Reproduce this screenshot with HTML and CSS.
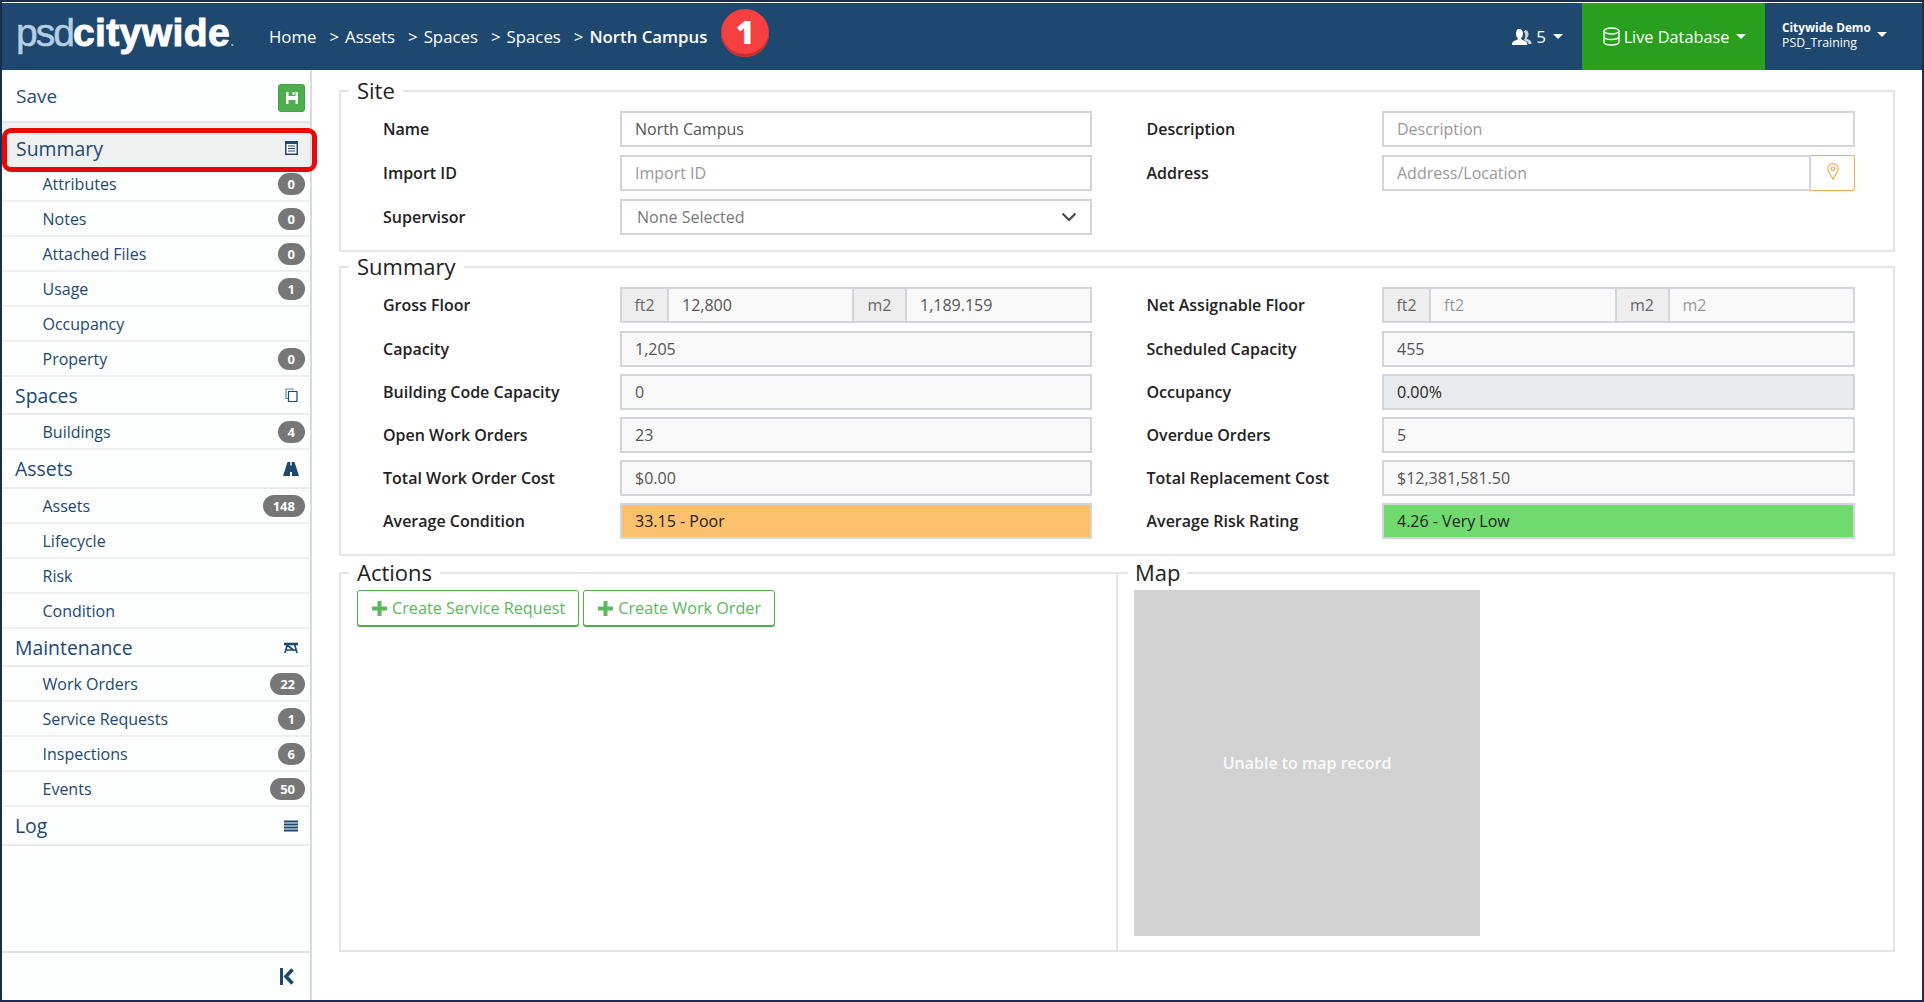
FILE: index.html
```html
<!DOCTYPE html>
<html>
  <head>
    <meta charset="utf-8">
    <title>North Campus</title>
    <link rel="stylesheet" href="styles.css">
  </head>

  <body>
    <div class="app">
      <header class="topbar">
        <div class="logo"><span class="logo-psd">psd</span><span class="logo-city">citywide</span><span class="logo-dot">.</span></div>
        <nav class="crumbs">
          <a>Home</a><i>&gt;</i><a>Assets</a><i>&gt;</i><a>Spaces</a><i>&gt;</i><a>Spaces</a><i>&gt;</i><a class="current">North Campus</a>
        </nav>
        <div class="callout">1</div>
        <div class="users">
          <svg width="20" height="18" viewBox="0 0 20 18"><path fill="#fff" d="M7 1c2.600 0 4 2 4 4.500 0 2-.8 3.500-1.800 4.500-.3.500-.2 1.200.4 1.500 2 .8 4.900 1.700 5.400 3.300.2.800.2 1.700.2 2.200H0c0-.6 0-1.500.3-2.200.6-1.600 3.400-2.500 5-3.300.6-.3.7-1 .3-1.500C4.700 9 4 7.500 4 5.500 4 3 5 1 7 1z"/><path fill="#fff" d="M13 2c2.200 0 3.500 1.700 3.500 4 0 1.800-.7 3-1.500 3.900-.3.400-.2 1 .3 1.200 1.500.7 3.300 1.300 3.900 2.700.2.600.3 1.400.3 2.200h-3c-.4-2-2.700-3.200-4.600-4 .8-1.300 1.300-2.700 1.300-4.500 0-1.800-.6-3.300-1.600-4.300.5-.2 1-.2 1.400-.2z" opacity=".75"/></svg>
          <span>5</span><b class="caret"></b>
        </div>
        <div class="db">
          <svg width="17" height="19" viewBox="0 0 17 19" fill="none" stroke="#fff" stroke-width="1.400"><ellipse cx="8.500" cy="4" rx="7.500" ry="3"/><path d="M1 4v11c0 1.700 3.400 3 7.500 3s7.500-1.300 7.500-3V4M1 9.500c0 1.700 3.400 3 7.500 3s7.500-1.300 7.500-3"/></svg>
          <span>Live Database</span><b class="caret"></b>
        </div>
        <div class="account">
          <div class="account-text">
            <strong>Citywide Demo</strong>
            <span>PSD_Training</span>
          </div>
          <b class="caret"></b>
        </div>
      </header>

      <div class="content">
        <aside class="sidebar">
          <div class="save-row">
            <span>Save</span>
            <button class="save-btn">
              <svg width="12" height="12" viewBox="0 0 12 12"><path fill="#fff" d="M0 0h2.500v4h7V0H12v12H9.500V8h-7v4H0z"/><path fill="#fff" d="M6.500 0h2v2.800h-2z"/></svg>
            </button>
          </div>
          <div class="menu-head is-active">
            <span>Summary</span>
            <svg width="13" height="14" viewBox="0 0 13 14"><path fill="#1f4870" d="M0 0h13v14H0z"/><path fill="#fff" d="M1.500 3h10v9.500h-10z"/><path stroke="#1f4870" stroke-width="1.200" d="M3 5h7M3 7.500h7M3 10h7"/></svg>
          </div>
          <a class="menu-item">Attributes<em>0</em></a>
          <a class="menu-item">Notes<em>0</em></a>
          <a class="menu-item">Attached Files<em>0</em></a>
          <a class="menu-item">Usage<em>1</em></a>
          <a class="menu-item">Occupancy</a>
          <a class="menu-item">Property<em>0</em></a>
          <div class="menu-head">
            <span>Spaces</span>
            <svg width="13" height="14" viewBox="0 0 13 14" fill="none" stroke="#1f4870" stroke-width="1.200"><path d="M8 2.500V1H1v9.500h2.500" stroke="#6d8aa5"/><path d="M3.500 3.500h8.500v10H3.500z"/></svg>
          </div>
          <a class="menu-item">Buildings<em>4</em></a>
          <div class="menu-head head-tall">
            <span>Assets</span>
            <svg class="road" width="16" height="14" viewBox="0 0 16 14"><path fill="#1f4870" d="M4.500 0h2.800v3.500h1.400V0h2.800L16 14H9v-4H7v4H0z"/></svg>
          </div>
          <a class="menu-item">Assets<em>148</em></a>
          <a class="menu-item">Lifecycle</a>
          <a class="menu-item">Risk</a>
          <a class="menu-item">Condition</a>
          <div class="menu-head">
            <span>Maintenance</span>
            <svg width="14" height="11" viewBox="0 0 14 11" fill="none" stroke="#1f4870"><path stroke-width="2.600" d="M0 2h14"/><path stroke-width="1.700" d="M3.500 2L1 11M10.500 2L13 11M3 3l7 5.500M2 8h10"/></svg>
          </div>
          <a class="menu-item">Work Orders<em>22</em></a>
          <a class="menu-item">Service Requests<em>1</em></a>
          <a class="menu-item">Inspections<em>6</em></a>
          <a class="menu-item">Events<em>50</em></a>
          <div class="menu-head head-tall">
            <span>Log</span>
            <svg width="14" height="12" viewBox="0 0 14 12"><path stroke="#1f4870" stroke-width="2" d="M0 1.500h14M0 4.500h14M0 7.500h14M0 10.500h14"/></svg>
          </div>
          <div class="side-foot">
            <svg width="14" height="17" viewBox="0 0 14 17"><path fill="#1f4870" d="M0 0h3v17H0z"/><path fill="none" stroke="#1f4870" stroke-width="3.600" d="M12.500 1.500L6 8.500l6.500 7"/></svg>
          </div>
          <div class="highlight"></div>
        </aside>

        <main class="main">
          <fieldset class="panel">
            <legend>Site</legend>
            <div class="form-grid site-grid">
              <label>Name</label>
              <input type="text" value="North Campus">
              <label>Description</label>
              <input type="text" placeholder="Description">

              <label>Import ID</label>
              <input type="text" placeholder="Import ID">
              <label>Address</label>
              <div class="group">
                <input type="text" placeholder="Address/Location">
                <span class="pin-btn">
                  <svg width="12" height="17" viewBox="0 0 12 17" fill="none" stroke="#f0ad4e" stroke-width="1.200"><path d="M6 16C4 12 .8 9 .8 5.800a5.200 5.200 0 0 1 10.400 0C11.200 9 8 12 6 16z"/><circle cx="6" cy="5.800" r="1.800"/></svg>
                </span>
              </div>

              <label>Supervisor</label>
              <div class="select">
                None Selected
                <svg width="16" height="10" viewBox="0 0 16 10" fill="none" stroke="#444" stroke-width="2"><path d="M1.500 1.500L8 8l6.500-6.500"/></svg>
              </div>
            </div>
          </fieldset>

          <fieldset class="panel">
            <legend>Summary</legend>
            <div class="form-grid">
              <label>Gross Floor</label>
              <div class="group">
                <span class="addon">ft2</span>
                <input class="ro" type="text" value="12,800">
                <span class="addon addon-m">m2</span>
                <input class="ro" type="text" value="1,189.159">
              </div>
              <label>Net Assignable Floor</label>
              <div class="group">
                <span class="addon">ft2</span>
                <input class="ro" type="text" placeholder="ft2">
                <span class="addon addon-m">m2</span>
                <input class="ro" type="text" placeholder="m2">
              </div>

              <label>Capacity</label>
              <input class="ro" type="text" value="1,205">
              <label>Scheduled Capacity</label>
              <input class="ro" type="text" value="455">

              <label>Building Code Capacity</label>
              <input class="ro" type="text" value="0">
              <label>Occupancy</label>
              <input class="ro occ" type="text" value="0.00%">

              <label>Open Work Orders</label>
              <input class="ro" type="text" value="23">
              <label>Overdue Orders</label>
              <input class="ro" type="text" value="5">

              <label>Total Work Order Cost</label>
              <input class="ro" type="text" value="$0.00">
              <label>Total Replacement Cost</label>
              <input class="ro" type="text" value="$12,381,581.50">

              <label>Average Condition</label>
              <input class="ro poor" type="text" value="33.15 - Poor">
              <label>Average Risk Rating</label>
              <input class="ro low" type="text" value="4.26 - Very Low">
            </div>
          </fieldset>

          <div class="bottom-row">
            <fieldset class="panel panel-actions">
              <legend>Actions</legend>
              <div class="actions">
                <button class="btn-add"><svg width="15" height="15" viewBox="0 0 15 15"><path stroke="#5cb85c" stroke-width="4" d="M7.500 0v15M0 7.500h15"/></svg>Create Service Request</button>
                <button class="btn-add"><svg width="15" height="15" viewBox="0 0 15 15"><path stroke="#5cb85c" stroke-width="4" d="M7.500 0v15M0 7.500h15"/></svg>Create Work Order</button>
              </div>
            </fieldset>
            <fieldset class="panel panel-map">
              <legend>Map</legend>
              <div class="map-box">Unable to map record</div>
            </fieldset>
          </div>
        </main>
      </div>
    </div>
  </body>
</html>
```

FILE: styles.css
```css
* {
  box-sizing: border-box;
}

body {
  margin: 0;
  font-family: "Open Sans", sans-serif;
  font-size: 16px;
  color: #222;
  background: #fff;
}

.app {
  width: 1924px;
  height: 1002px;
  display: flex;
  flex-direction: column;
  border: 2px solid #1b2d4f;
  overflow: hidden;
  position: relative;
}

/* top bar */
.topbar {
  height: 67px;
  margin-top: 1px;
  flex: none;
  display: flex;
  align-items: center;
  background: #1f4870;
  color: #fff;
  position: relative;
}

.logo {
  width: 267px;
  padding-left: 14px;
  font-family: "Liberation Sans", sans-serif;
  font-size: 39px;
  line-height: 40px;
  white-space: nowrap;
}

.logo-psd {
  color: #b6cfe2;
  letter-spacing: -2px;
  -webkit-text-stroke: .5px #b6cfe2;
}

.logo-city {
  font-weight: bold;
  color: #fff;
  -webkit-text-stroke: 1px #fff;
  letter-spacing: .4px;
}

.logo-dot {
  font-size: 16px;
  color: #b6cfe2;
}

.crumbs {
  display: flex;
  font-size: 16.800px;
  white-space: nowrap;
}

.crumbs i {
  font-style: normal;
  margin: 0 6px 0 13px;
}

.crumbs .current {
  font-weight: 600;
}

.callout {
  position: absolute;
  left: 719px;
  top: 6px;
  width: 48px;
  height: 48px;
  border-radius: 50%;
  background: #f44040;
  box-shadow: inset 0 -3px 0 #c93030;
  color: #fff;
  font-size: 32px;
  font-weight: 800;
  line-height: 46px;
  text-align: center;
}

.users {
  margin-left: auto;
  display: flex;
  align-items: center;
  gap: 4px;
  font-size: 17px;
  margin-right: 19px;
}

.caret {
  display: inline-block;
  width: 0;
  height: 0;
  margin-left: 3px;
  border-top: 5px solid #fff;
  border-left: 5px solid transparent;
  border-right: 5px solid transparent;
}

.db {
  width: 183px;
  height: 100%;
  display: flex;
  align-items: center;
  justify-content: center;
  gap: 4px;
  background: #28a01e;
  font-size: 16.300px;
}

.db svg {
  margin-left: 2px;
}

.account {
  width: 157px;
  display: flex;
  align-items: center;
  padding-left: 17px;
}

.account-text {
  font-size: 12.300px;
  line-height: 15px;
  width: 92px;
  margin-top: -4px;
}

.account-text strong {
  display: block;
  font-size: 11.800px;
  font-weight: 700;
  white-space: nowrap;
}

.account .caret {
  margin-top: -4px;
}

/* sidebar */
.content {
  flex: 1;
  display: flex;
  min-height: 0;
}

.sidebar {
  width: 310px;
  flex: none;
  display: flex;
  flex-direction: column;
  border-right: 2px solid #d9dcdf;
  background: #fcfefe;
  color: #1f4870;
  position: relative;
}

.save-row {
  height: 53px;
  display: flex;
  align-items: center;
  justify-content: space-between;
  padding: 0 5px 0 14px;
  border-bottom: 2px solid #e2e4e6;
  font-size: 19px;
  color: #2b4f74;
}

.save-btn {
  width: 27px;
  height: 28px;
  padding: 0;
  margin-top: 4px;
  background: #4cae4c;
  border: 1px solid #43a047;
  border-radius: 3px;
  display: flex;
  align-items: center;
  justify-content: center;
}

.menu-head {
  height: 38px;
  display: flex;
  align-items: center;
  justify-content: space-between;
  padding: 0 12px 0 13px;
  font-size: 19.400px;
  border-bottom: 2px solid #e8eaeb;
}

.menu-head .road {
  margin-right: -1px;
}

.head-tall {
  height: 39px;
}

.menu-head.is-active {
  height: 44px;
  background: #eff0f0;
  padding-top: 6px;
  padding-left: 14px;
  border-bottom: 0;
}

.menu-item {
  height: 35px;
  display: flex;
  align-items: center;
  justify-content: space-between;
  padding: 0 5px 0 40.500px;
  border-bottom: 2px solid #eff0f1;
}

.menu-item em {
  min-width: 27px;
  height: 22px;
  margin-top: 1px;
  padding: 0 10px;
  border-radius: 11px;
  background: #777;
  color: #fff;
  font-style: normal;
  font-size: 13px;
  font-weight: 700;
  line-height: 22px;
  text-align: center;
}

.side-foot {
  margin-top: auto;
  height: 49px;
  display: flex;
  align-items: center;
  justify-content: flex-end;
  padding: 0 16px 0 0;
  border-top: 2px solid #dfe1e3;
}

/* red annotation round the active item */
.highlight {
  position: absolute;
  left: 0;
  top: 58px;
  width: 315px;
  height: 44px;
  border: 5px solid #e80808;
  border-radius: 9px;
}

/* main panels */
.main {
  flex: 1;
  min-width: 0;
  padding: 7px 27px 0 27px;
}

.panel {
  margin: 0;
  padding: 6px 37px 15px 42px;
  border: 2px solid #e4e5e6;
  min-width: 0;
}

.panel + .panel {
  margin-top: 1.400px;
}

.panel legend {
  margin-left: -34px;
  padding: 0 8px 2px;
  font-size: 22px;
  line-height: 26px;
  font-weight: 500;
  color: #222;
}

.form-grid {
  display: grid;
  grid-template-columns: 237px 472px 290px 473px;
  row-gap: 7.200px;
  grid-auto-rows: 36px;
}

.site-grid {
  row-gap: 8px;
}

.form-grid label {
  font-weight: 600;
  line-height: 36px;
  color: #222;
}

.form-grid label:nth-child(4n+3) {
  margin-left: 54.500px;
}

input {
  width: 100%;
  min-width: 0;
  height: 36px;
  padding: 0 13px;
  font-family: inherit;
  font-size: 16px;
  color: #555;
  background: #fff;
  border: 2px solid #d2d5da;
  border-radius: 0;
}

input::placeholder {
  color: #999;
  opacity: 1;
}

.ro {
  background: #f9f9f9;
}

.occ {
  background: #e9ecef;
  color: #222;
}

.poor {
  background: #fdc06c;
  color: #222;
}

.low {
  background: #6fdb6f;
  color: #222;
}

.group {
  display: flex;
}

.addon {
  flex: none;
  width: 47px;
  height: 36px;
  background: #eee;
  border: 2px solid #d2d5da;
  border-right: 0;
  color: #666;
  line-height: 32px;
  text-align: center;
}

.addon-m {
  width: 53px;
}

.group input {
  flex: 1;
}

.group input:has(+ .addon) {
  border-right: 0;
}

.pin-btn {
  flex: none;
  width: 44px;
  height: 36px;
  display: flex;
  align-items: flex-start;
  justify-content: center;
  padding-top: 7px;
  border: 1px solid #f0ad4e;
  border-left: 0;
  border-radius: 0 3px 3px 0;
}

.select {
  height: 36px;
  padding: 0 13px 0 15px;
  display: flex;
  align-items: center;
  justify-content: space-between;
  border: 2px solid #d2d5da;
  color: #777;
}

/* actions and map */
.bottom-row {
  display: flex;
  margin-top: 3px;
}

.panel-actions {
  width: 777px;
  height: 393px;
  padding: 3px 0 0 16px;
  border-right: 0;
}

.panel-actions legend {
  margin-left: -8px;
}

.panel-map {
  flex: 1;
  height: 393px;
  padding: 3px 0 0 16px;
}

.panel + .panel-map {
  margin-top: 0;
}

.panel-map legend {
  margin-left: -6px;
  padding: 0 7px 2px;
}

.actions {
  display: flex;
  gap: 4px;
}

.btn-add {
  height: 36px;
  padding: 0 13px 0 14px;
  background: #fff;
  border: 1px solid #4cae4c;
  border-radius: 3px;
  box-shadow: 0 1px 0 #4cae4c;
  color: #5cb85c;
  font-family: inherit;
  font-size: 16.200px;
  display: flex;
  align-items: center;
  gap: 5px;
  white-space: nowrap;
}

.map-box {
  width: 346px;
  height: 346px;
  display: flex;
  align-items: center;
  justify-content: center;
  background: #d2d2d2;
  color: #fafafa;
  font-weight: 600;
}
```
